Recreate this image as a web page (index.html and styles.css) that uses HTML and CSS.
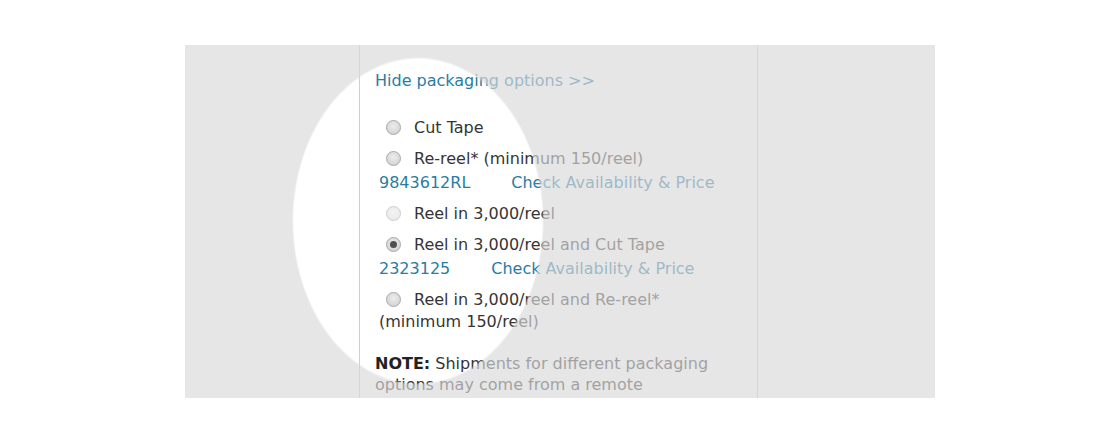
FILE: index.html
```html
<!DOCTYPE html>
<html>
<head>
<meta charset="utf-8">
<link rel="stylesheet" href="styles.css">
</head>
<body>
<div class="stage">
  <div class="side side-left"></div>
  <div class="panel">
    <a class="toggle">Hide packaging options &gt;&gt;</a>
    <div class="options">
      <div class="opt"><span class="radio"></span>Cut Tape</div>
      <div class="opt"><span class="radio"></span>Re-reel* (minimum 150/reel)</div>
      <div class="part"><a class="pn">9843612RL</a><a class="check">Check Availability &amp; Price</a></div>
      <div class="opt"><span class="radio radio-disabled"></span>Reel in 3,000/reel</div>
      <div class="opt"><span class="radio radio-checked"></span>Reel in 3,000/reel and Cut Tape</div>
      <div class="part"><a class="pn">2323125</a><a class="check">Check Availability &amp; Price</a></div>
      <div class="opt"><span class="radio"></span>Reel in 3,000/reel and Re-reel*<br>(minimum 150/reel)</div>
    </div>
    <p class="note"><b>NOTE:</b> Shipments for different packaging options may come from a remote location</p>
  </div>
  <div class="side side-right"></div>
  <div class="spotlight"></div>
</div>
</body>
</html>
```

FILE: styles.css
```css
html, body {
  margin: 0;
  padding: 0;
  background: #ffffff;
}

body {
  font-family: "DejaVu Sans", Verdana, sans-serif;
  font-size: 16px;
  color: #353535;
}

.stage {
  position: relative;
  width: 750px;
  height: 353px;
  margin: 45px auto 0;
  display: flex;
  overflow: hidden;
  background: #ffffff;
}

.side {
  flex: none;
}

.side-left {
  width: 174px;
}

.side-right {
  width: 177px;
  border-left: 1px solid #d2d2d2;
  border-right: 1px solid #dcdcdc;
}

.panel {
  flex: none;
  width: 367px;
  border-left: 1px solid #cfcfcf;
  padding: 25px 15px 0 15px;
}

.toggle {
  display: block;
  line-height: 22px;
  color: #2a7ca3;
  text-decoration: none;
}

.options {
  margin-top: 25px;
  padding-left: 4px;
}

.opt {
  line-height: 22px;
  margin-top: 9px;
}

.opt:first-child {
  margin-top: 0;
}

.radio {
  display: inline-block;
  box-sizing: border-box;
  width: 15px;
  height: 15px;
  border: 1px solid #a8a8a8;
  border-radius: 50%;
  background: radial-gradient(circle at 50% 40%, #ededed 0%, #d6d6d6 70%, #c6c6c6 100%);
  margin: 0 13px 0 7px;
  vertical-align: -2px;
  position: relative;
}

.radio-disabled {
  border-color: #cdcdcd;
  background: radial-gradient(circle at 50% 40%, #f4f4f4 0%, #e6e6e6 100%);
}

.radio-checked::after {
  content: "";
  position: absolute;
  left: 3px;
  top: 3px;
  width: 7px;
  height: 7px;
  border-radius: 50%;
  background: #505050;
}

.part {
  line-height: 22px;
  margin-top: 2px;
}

.pn {
  color: #2a7ca3;
}

.check {
  color: #2a7ca3;
  margin-left: 41px;
}

.note {
  margin: 20px 0 0 0;
  max-width: 336px;
  line-height: 21px;
  color: #353535;
}

.note b {
  color: #222222;
}

.spotlight {
  position: absolute;
  inset: 0;
  pointer-events: none;
  background: radial-gradient(ellipse 126px 164px at 233px 176px, rgba(217, 217, 217, 0) 98.5%, rgba(217, 217, 217, 0.66) 100%);
}
```
